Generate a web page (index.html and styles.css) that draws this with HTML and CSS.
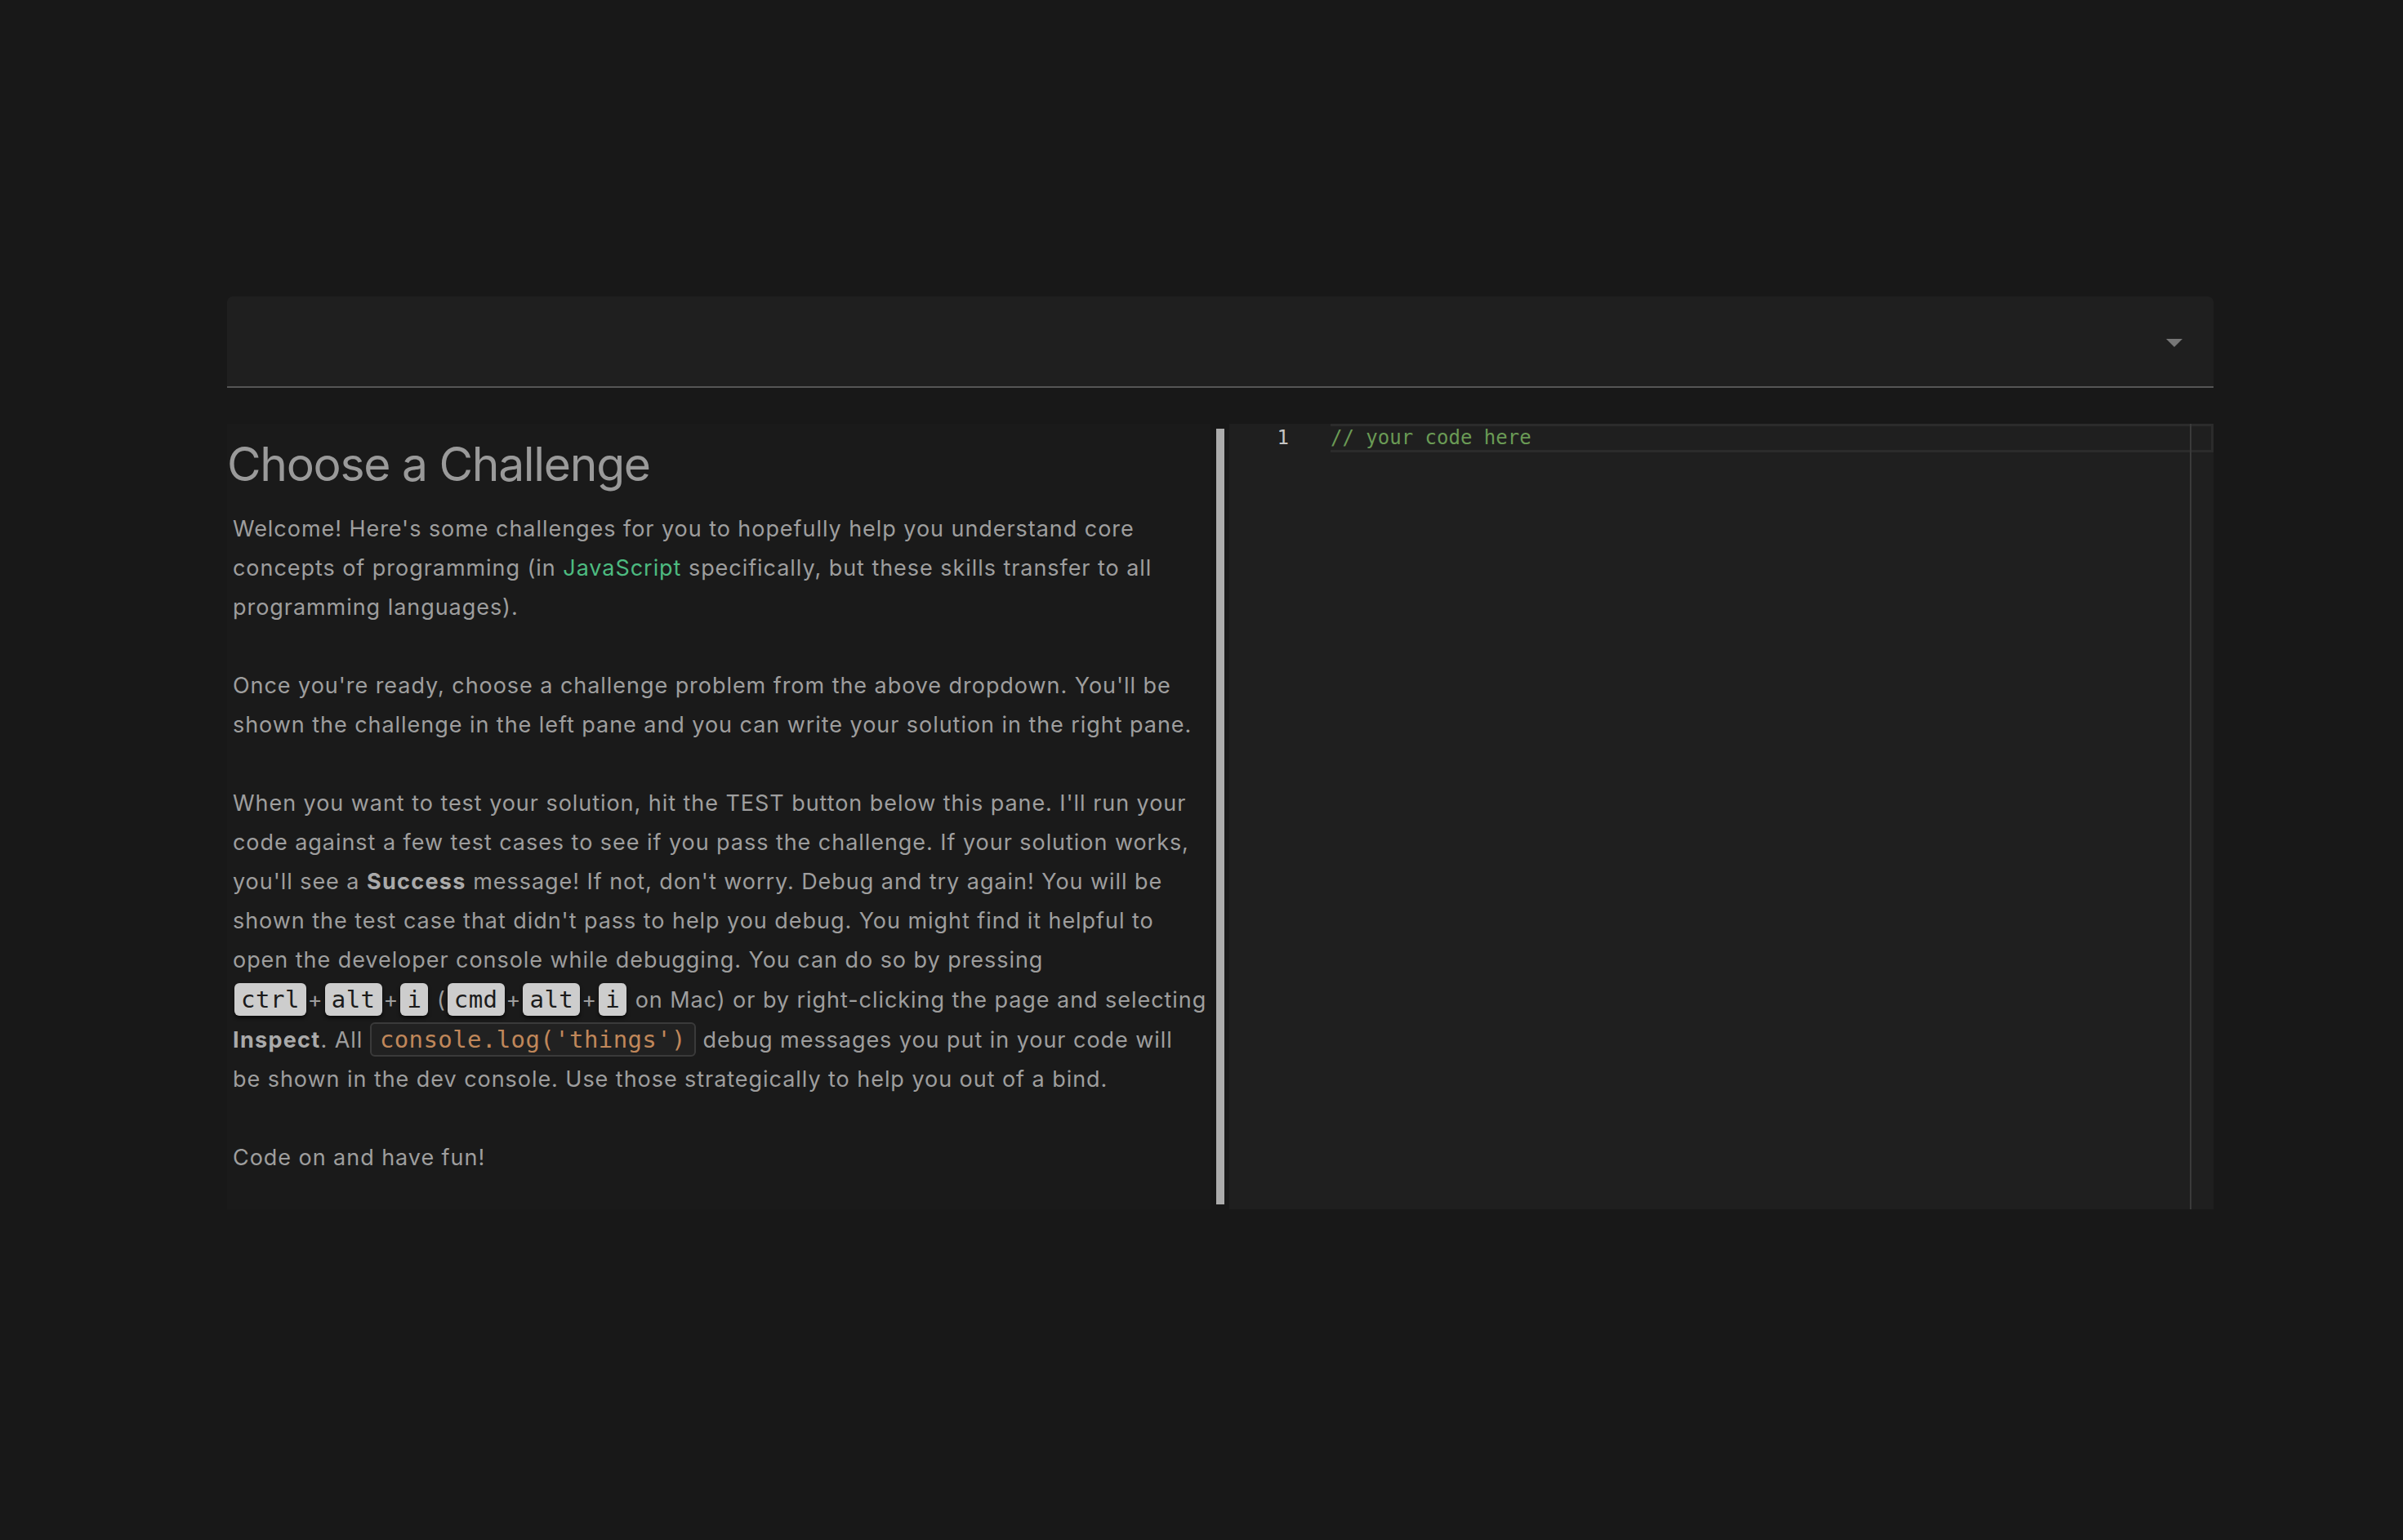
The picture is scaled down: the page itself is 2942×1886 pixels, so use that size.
FILE: index.html
```html
<!DOCTYPE html>
<html lang="en">
<head>
<meta charset="utf-8">
<title>Choose a Challenge</title>
<link rel="stylesheet" href="styles.css">
</head>
<body>
<div class="app">
  <div class="select">
    <span class="caret"></span>
  </div>
  <div class="main">
    <section class="pane">
      <h1 class="title">Choose a Challenge</h1>
      <div class="intro">
        <p>Welcome! Here's some challenges for you to hopefully help you understand core concepts of programming (in <a class="link" href="#">JavaScript</a> specifically, but these skills transfer to all programming languages).</p>
        <p>Once you're ready, choose a challenge problem from the above dropdown. You'll be shown the challenge in the left pane and you can write your solution in the right pane.</p>
        <p>When you want to test your solution, hit the TEST button below this pane. I'll run your code against a few test cases to see if you pass the challenge. If your solution works, you'll see a <b>Success</b> message! If not, don't worry. Debug and try again! You will be shown the test case that didn't pass to help you debug. You might find it helpful to open the developer console while debugging. You can do so by pressing <kbd>ctrl</kbd>+<kbd>alt</kbd>+<kbd>i</kbd> (<kbd>cmd</kbd>+<kbd>alt</kbd>+<kbd>i</kbd> on Mac) or by right-clicking the page and selecting <b>Inspect</b>. All <code>console.log('things')</code> debug messages you put in your code will be shown in the dev console. Use those strategically to help you out of a bind.</p>
        <p>Code on and have fun!</p>
      </div>
    </section>
    <div class="resizer"><div class="bar"></div></div>
    <section class="editor">
      <div class="gutter"><div class="ln">1</div></div>
      <div class="code">
        <div class="line current"><span class="comment">// your code here</span></div>
      </div>
      <div class="ruler"></div>
    </section>
  </div>
</div>
</body>
</html>
```
FILE: styles.css
```css
html, body {
  margin: 0;
  padding: 0;
  background: #181818;
}
body {
  font-family: Inter, "Noto Sans", "Liberation Sans", sans-serif;
  color: #9e9e9e;
}
.app {
  padding: 363px 0 0 278px;
  width: 2432px;
}
.select {
  height: 110px;
  background: #1f1f1f;
  border-bottom: 2px solid #555555;
  border-radius: 7px 7px 0 0;
  display: flex;
  align-items: center;
  justify-content: flex-end;
  padding-right: 38px;
}
.caret {
  width: 0;
  height: 0;
  border-left: 10px solid transparent;
  border-right: 10px solid transparent;
  border-top: 10px solid #777777;
  margin-top: 4px;
}
.main {
  display: flex;
  margin-top: 44px;
  height: 962px;
}
.pane {
  width: 1204px;
  background: #1a1a1a;
}
.title {
  margin: 16px 0 0 0;
  font-size: 57px;
  line-height: 68px;
  font-weight: 400;
  letter-spacing: -1.3px;
  color: #9a9a9a;
}
.intro {
  padding: 21px 4px 0 7px;
  font-size: 27px;
  line-height: 48px;
  letter-spacing: 0.95px;
}
.intro p {
  margin: 0 0 48px 0;
}
.link {
  color: #4dbb80;
  text-decoration: none;
}
.intro b {
  color: #aaaaaa;
  font-weight: 700;
  letter-spacing: 1.3px;
}
kbd {
  font-family: "DejaVu Sans Mono", monospace;
  font-size: 29px;
  letter-spacing: 0.5px;
  background: #cdcdcd;
  color: #1b1b1b;
  border-radius: 6px;
  padding: 3px 8px;
  margin: 0 2px;
  box-shadow: 0 3px 4px rgba(0, 0, 0, 0.6);
}
code {
  font-family: "DejaVu Sans Mono", monospace;
  font-size: 29px;
  letter-spacing: 0.4px;
  color: #c0875a;
  background: #212121;
  border: 2px solid #3a3a3a;
  border-radius: 6px;
  padding: 2px 10px;
}
.resizer {
  width: 23px;
  display: flex;
  justify-content: center;
  padding: 6px 0;
  box-sizing: border-box;
}
.bar {
  width: 10px;
  background: #ababab;
}
.editor {
  position: relative;
  flex: 1;
  background: #1f1f1f;
  display: flex;
  font-family: "DejaVu Sans Mono", monospace;
  font-size: 24px;
}
.gutter {
  width: 124px;
  box-sizing: border-box;
  padding-right: 51px;
  text-align: right;
}
.ln {
  height: 35px;
  line-height: 35px;
  color: #c6c6c6;
}
.code {
  flex: 1;
}
.line {
  height: 35px;
  line-height: 29px;
  box-sizing: border-box;
}
.current {
  border: 3px solid #2b2b2b;
  border-left: 0;
}
.comment {
  color: #6a9a55;
}
.ruler {
  position: absolute;
  top: 0;
  bottom: 0;
  right: 27px;
  width: 2px;
  background: #3a3a3a;
}
```
